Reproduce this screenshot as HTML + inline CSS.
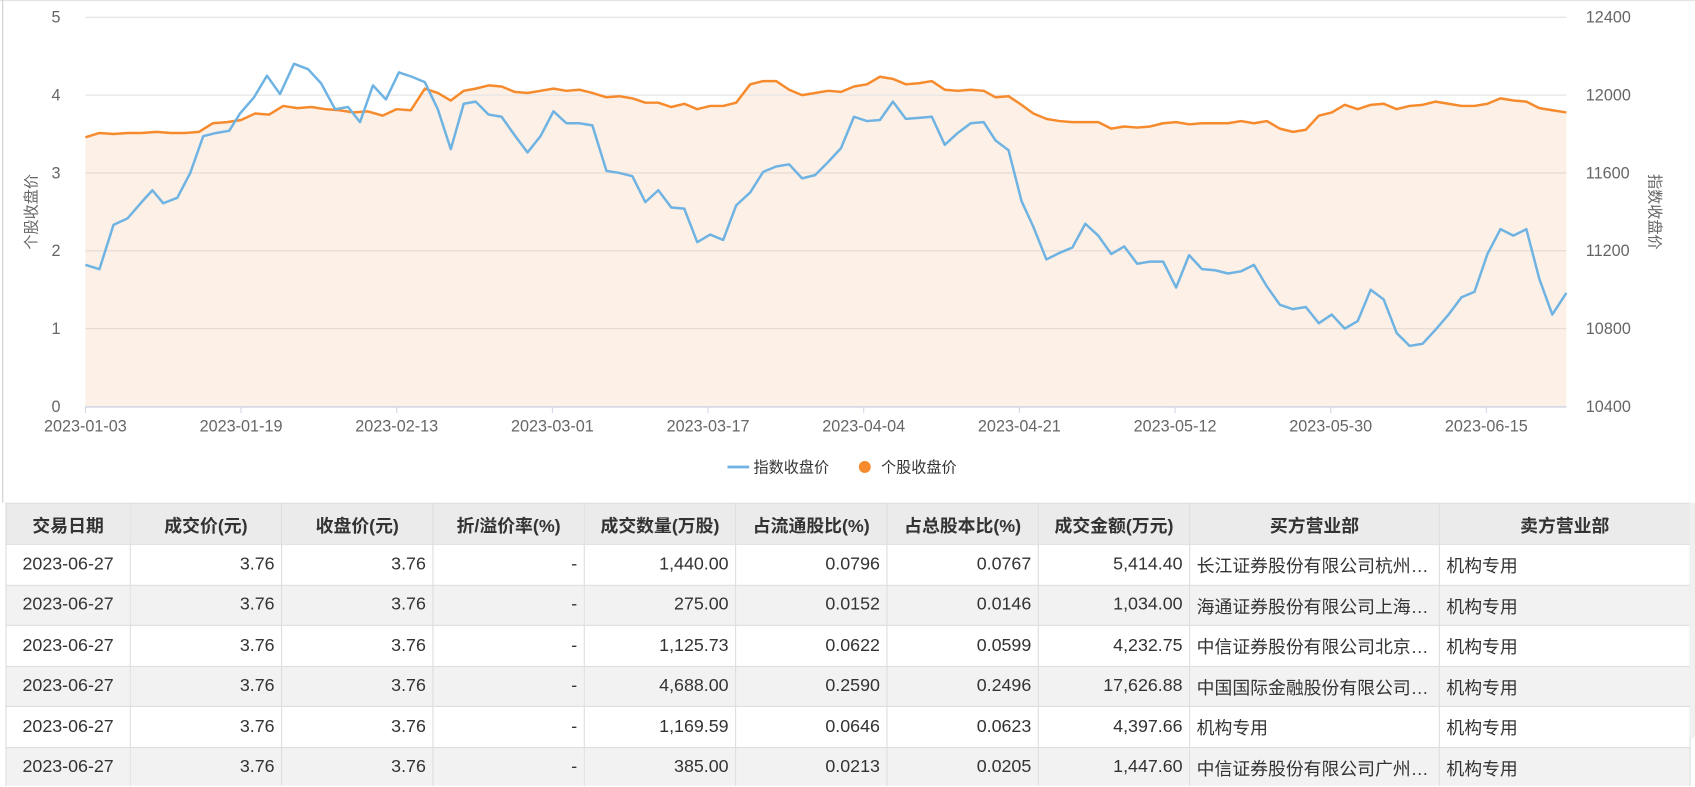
<!DOCTYPE html>
<html><head><meta charset="utf-8"><style>
html,body{margin:0;padding:0;background:#fff;width:1695px;height:787px;overflow:hidden;font-family:"Liberation Sans","Noto Sans CJK SC",sans-serif;}
.wrap{position:absolute;left:0;top:0;width:1568px;height:727px;transform:scale(1.08099);transform-origin:0 0;overflow:hidden;}
.lb{position:absolute;left:2px;top:0;width:1px;height:465px;background:#ccc;}
.tb{position:absolute;left:0;top:0;width:1568px;height:1px;background:#e4e4e4;}
svg{position:absolute;left:0;top:0;}
table{position:absolute;left:5px;top:465px;border-collapse:collapse;table-layout:fixed;width:1558px;font-size:16.5px;color:#333;}
th,td{border:1px solid #ddd;padding:0 6px;white-space:nowrap;overflow:hidden;text-overflow:ellipsis;box-sizing:border-box;}
th{background:#ebebeb;font-weight:bold;text-align:center;height:38px;}
td{text-align:right;height:37.5px;}
td.c{text-align:center;}
td.l{text-align:left;}
tr:nth-child(odd) td{background:#f2f2f2;}
.sb{position:absolute;left:1563px;top:465px;width:5px;height:218px;background:#f0f0f0;border-radius:0 0 3px 3px;}
</style></head><body><div class="wrap">
<div class="tb"></div><div class="lb"></div>
<svg width="1568" height="460" font-family="Liberation Sans, Noto Sans CJK SC, sans-serif">
<polygon fill="#fdf0e6" points="79,376 79,127 92,123 105,124 118,123 131,123 145,122 158,123 171,123 184,122 197,114 210,113 223,111 236,105 249,106 262,98 275,100 288,99 301,101 314,102 327,104 340,103 354,107 367,101 380,102 393,82 405,86 417,93 429,84 440,82 452,79 464,80 476,85 488,86 500,84 512,82 524,84 536,83 548,86 561,90 573,89 585,91 597,95 609,95 621,99 633,96 645,101 657,98 669,98 681,95 694,78 706,75 718,75 730,83 742,88 754,86 766,84 778,85 790,80 802,78 814,71 826,73 838,78 850,77 862,75 874,83 886,84 898,83 910,84 921,90 933,89 945,97 956,105 968,110 980,112 992,113 1004,113 1016,113 1028,119 1040,117 1052,118 1064,117 1076,114 1088,113 1100,115 1112,114 1124,114 1136,114 1148,112 1160,114 1172,112 1184,119 1196,122 1208,120 1220,107 1232,104 1244,97 1256,101 1268,97 1280,96 1292,101 1304,98 1316,97 1328,94 1340,96 1352,98 1364,98 1376,96 1388,91 1400,93 1412,94 1424,100 1436,102 1449,104 1449,376"/>
<g stroke="#e6e6e6" stroke-width="1.2">
<line x1="79" y1="16" x2="1449" y2="16"/><line x1="79" y1="88" x2="1449" y2="88"/>
</g>
<g stroke="#e8ddd5" stroke-width="1.2"><line x1="79" y1="160" x2="1449" y2="160"/><line x1="79" y1="232" x2="1449" y2="232"/><line x1="79" y1="304" x2="1449" y2="304"/></g>
<line x1="79" y1="376.5" x2="1449" y2="376.5" stroke="#d3d8e6" stroke-width="1.5"/>
<g stroke="#d3d8e6" stroke-width="1"><line x1="79" y1="376" x2="79" y2="382"/><line x1="223" y1="376" x2="223" y2="382"/><line x1="367" y1="376" x2="367" y2="382"/><line x1="511" y1="376" x2="511" y2="382"/><line x1="655" y1="376" x2="655" y2="382"/><line x1="799" y1="376" x2="799" y2="382"/><line x1="943" y1="376" x2="943" y2="382"/><line x1="1087" y1="376" x2="1087" y2="382"/><line x1="1231" y1="376" x2="1231" y2="382"/><line x1="1375" y1="376" x2="1375" y2="382"/></g>
<polyline fill="none" stroke="#f68b2e" stroke-width="2.3" stroke-linejoin="round" points="79,127 92,123 105,124 118,123 131,123 145,122 158,123 171,123 184,122 197,114 210,113 223,111 236,105 249,106 262,98 275,100 288,99 301,101 314,102 327,104 340,103 354,107 367,101 380,102 393,82 405,86 417,93 429,84 440,82 452,79 464,80 476,85 488,86 500,84 512,82 524,84 536,83 548,86 561,90 573,89 585,91 597,95 609,95 621,99 633,96 645,101 657,98 669,98 681,95 694,78 706,75 718,75 730,83 742,88 754,86 766,84 778,85 790,80 802,78 814,71 826,73 838,78 850,77 862,75 874,83 886,84 898,83 910,84 921,90 933,89 945,97 956,105 968,110 980,112 992,113 1004,113 1016,113 1028,119 1040,117 1052,118 1064,117 1076,114 1088,113 1100,115 1112,114 1124,114 1136,114 1148,112 1160,114 1172,112 1184,119 1196,122 1208,120 1220,107 1232,104 1244,97 1256,101 1268,97 1280,96 1292,101 1304,98 1316,97 1328,94 1340,96 1352,98 1364,98 1376,96 1388,91 1400,93 1412,94 1424,100 1436,102 1449,104"/>
<polyline fill="none" stroke="#6fb3e3" stroke-width="2.3" stroke-linejoin="round" points="79,245 92,249 105,208 118,202 131,187 141,176 151,188 164,183 176,160 188,126 200,123 212,121 222,105 235,90 247,70 259,87 272,59 285,64 297,77 310,101 322,99 333,113 345,79 357,92 369,67 381,71 393,76 405,101 417,138 429,96 440,94 452,106 464,108 476,125 488,141 500,126 512,103 524,114 536,114 548,116 561,158 573,160 585,163 597,187 609,176 621,192 633,193 645,224 657,217 669,222 681,190 694,178 706,159 718,154 730,152 742,165 754,162 766,150 778,137 790,108 802,112 814,111 826,94 838,110 850,109 862,108 874,134 886,123 898,114 910,113 921,130 933,139 945,186 956,210 968,240 980,234 992,229 1004,207 1016,218 1028,235 1040,228 1052,244 1064,242 1076,242 1088,266 1100,236 1112,249 1124,250 1136,253 1148,251 1160,245 1172,265 1184,282 1196,286 1208,284 1220,299 1232,291 1244,304 1256,297 1268,268 1280,277 1292,308 1304,320 1316,318 1328,305 1340,291 1352,275 1364,270 1376,235 1388,212 1400,218 1412,212 1424,258 1436,291 1449,271"/>
<g fill="#666" font-size="15" text-anchor="end">
<text x="56" y="21">5</text><text x="56" y="93">4</text><text x="56" y="165">3</text><text x="56" y="237">2</text><text x="56" y="309">1</text><text x="56" y="381">0</text>
</g>
<g fill="#666" font-size="15" text-anchor="start">
<text x="1467" y="21">12400</text><text x="1467" y="93">12000</text><text x="1467" y="165">11600</text><text x="1467" y="237">11200</text><text x="1467" y="309">10800</text><text x="1467" y="381">10400</text>
</g>
<g fill="#666" font-size="15" text-anchor="middle">
<text x="79" y="399">2023-01-03</text><text x="223" y="399">2023-01-19</text><text x="367" y="399">2023-02-13</text><text x="511" y="399">2023-03-01</text><text x="655" y="399">2023-03-17</text><text x="799" y="399">2023-04-04</text><text x="943" y="399">2023-04-21</text><text x="1087" y="399">2023-05-12</text><text x="1231" y="399">2023-05-30</text><text x="1375" y="399">2023-06-15</text>
</g>
<text x="30" y="196" fill="#666" font-size="14" text-anchor="middle" transform="rotate(-90 30 196)" dy="4">个股收盘价</text>
<text x="1530" y="196" fill="#666" font-size="14" text-anchor="middle" transform="rotate(90 1530 196)" dy="4">指数收盘价</text>
<line x1="673" y1="432" x2="693" y2="432" stroke="#6fb3e3" stroke-width="2.5"/>
<text x="697" y="437" fill="#333" font-size="14">指数收盘价</text>
<circle cx="800" cy="432" r="5.5" fill="#f68b2e"/>
<text x="815" y="437" fill="#333" font-size="14">个股收盘价</text>
</svg>
<table>
<colgroup><col style="width:115px"><col style="width:140px"><col style="width:140px"><col style="width:140px"><col style="width:140px"><col style="width:140px"><col style="width:140px"><col style="width:140px"><col style="width:231px"><col style="width:232px"></colgroup>
<tr><th>交易日期</th><th>成交价(元)</th><th>收盘价(元)</th><th>折/溢价率(%)</th><th>成交数量(万股)</th><th>占流通股比(%)</th><th>占总股本比(%)</th><th>成交金额(万元)</th><th>买方营业部</th><th>卖方营业部</th></tr>
<tr><td class="c">2023-06-27</td><td>3.76</td><td>3.76</td><td>-</td><td>1,440.00</td><td>0.0796</td><td>0.0767</td><td>5,414.40</td><td class="l">长江证券股份有限公司杭州分公司</td><td class="l">机构专用</td></tr>
<tr><td class="c">2023-06-27</td><td>3.76</td><td>3.76</td><td>-</td><td>275.00</td><td>0.0152</td><td>0.0146</td><td>1,034.00</td><td class="l">海通证券股份有限公司上海分公司</td><td class="l">机构专用</td></tr>
<tr><td class="c">2023-06-27</td><td>3.76</td><td>3.76</td><td>-</td><td>1,125.73</td><td>0.0622</td><td>0.0599</td><td>4,232.75</td><td class="l">中信证券股份有限公司北京分公司</td><td class="l">机构专用</td></tr>
<tr><td class="c">2023-06-27</td><td>3.76</td><td>3.76</td><td>-</td><td>4,688.00</td><td>0.2590</td><td>0.2496</td><td>17,626.88</td><td class="l">中国国际金融股份有限公司上海分公司</td><td class="l">机构专用</td></tr>
<tr><td class="c">2023-06-27</td><td>3.76</td><td>3.76</td><td>-</td><td>1,169.59</td><td>0.0646</td><td>0.0623</td><td>4,397.66</td><td class="l">机构专用</td><td class="l">机构专用</td></tr>
<tr><td class="c">2023-06-27</td><td>3.76</td><td>3.76</td><td>-</td><td>385.00</td><td>0.0213</td><td>0.0205</td><td>1,447.60</td><td class="l">中信证券股份有限公司广州分公司</td><td class="l">机构专用</td></tr>
<tr><td class="c">2023-06-27</td><td>3.76</td><td>3.76</td><td>-</td><td>500.00</td><td>0.0276</td><td>0.0266</td><td>1,880.00</td><td class="l">机构专用</td><td class="l">机构专用</td></tr>
</table>
<div class="sb"></div>
</div></body></html>
